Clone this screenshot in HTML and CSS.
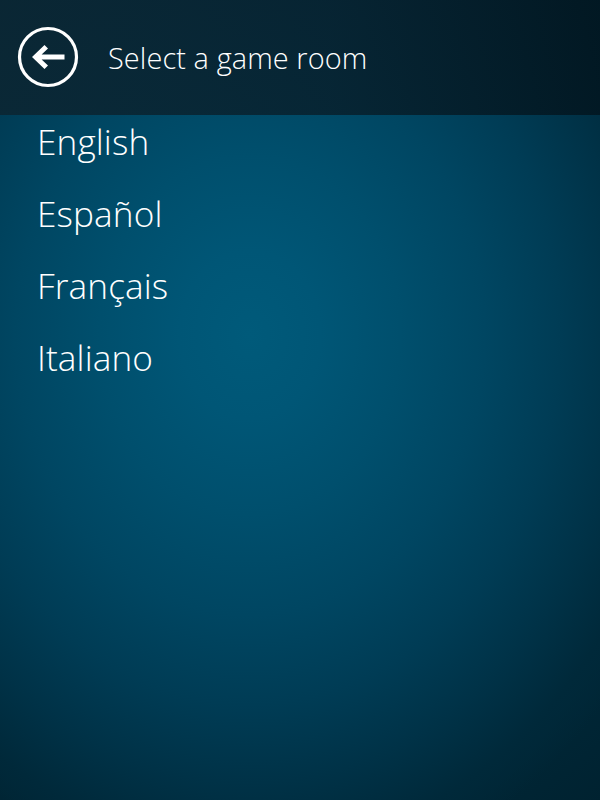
FILE: index.html
```html
<!DOCTYPE html>
<html lang="en">
<head>
<meta charset="utf-8">
<title>Select a game room</title>
<link rel="stylesheet" href="styles.css">
</head>
<body>
<div class="screen">
  <header class="header">
    <button class="back" aria-label="Back">
      <svg viewBox="0 0 62 62" width="62" height="62" aria-hidden="true">
        <circle cx="31" cy="31" r="28.5" fill="none" stroke="#ffffff" stroke-width="3.2"/>
        <path d="M15 31 L27.5 19 L31 22.5 L24.6 28.5 L47.5 28.5 L47.5 33.5 L24.6 33.5 L31 39.5 L27.5 43 Z" fill="#ffffff"/>
      </svg>
    </button>
    <h1 class="title">Select a game room</h1>
  </header>
  <ul class="rooms">
    <li class="room">English</li>
    <li class="room">Español</li>
    <li class="room">Français</li>
    <li class="room">Italiano</li>
  </ul>
</div>
</body>
</html>
```
FILE: styles.css
```css
html, body {
  margin: 0;
  padding: 0;
  width: 600px;
  height: 800px;
  overflow: hidden;
}
body {
  font-family: "Open Sans", "Noto Sans", sans-serif;
  color: #ffffff;
  background: #011c28;
}
.screen {
  width: 600px;
  height: 800px;
  background:
    radial-gradient(ellipse 470px 560px at 250px 335px,
      #005a7a 0%,
      #005676 15%,
      #004f6d 32%,
      #004662 50%,
      #003c55 66%,
      #003247 80%,
      #00293a 92%,
      rgba(0, 38, 52, 0) 100%),
    radial-gradient(ellipse 700px 700px at 260px 340px,
      #00293a 60%,
      #002230 82%,
      #001c27 100%);
  background-color: #011b26;
}
.header {
  height: 115px;
  display: flex;
  align-items: center;
  padding-left: 17px;
  box-sizing: border-box;
  background: linear-gradient(90deg, rgba(12, 36, 48, 0.84) 0%, rgba(8, 30, 42, 0.82) 55%, rgba(2, 22, 32, 0.88) 100%);
}
.back {
  width: 62px;
  height: 62px;
  padding: 0;
  margin: -2px 0 0 0;
  border: none;
  background: transparent;
  display: flex;
  cursor: pointer;
}
.title {
  margin: 0 0 0 29px;
  font-size: 28.9px;
  line-height: 38px;
  font-weight: 360;
  letter-spacing: 0.1px;
}
.rooms {
  list-style: none;
  margin: 0;
  padding: 3px 0 0 37px;
  display: flex;
  flex-direction: column;
  gap: 26px;
}
.room {
  font-size: 35.2px;
  line-height: 46px;
  font-weight: 360;
  letter-spacing: 0.1px;
}
```
